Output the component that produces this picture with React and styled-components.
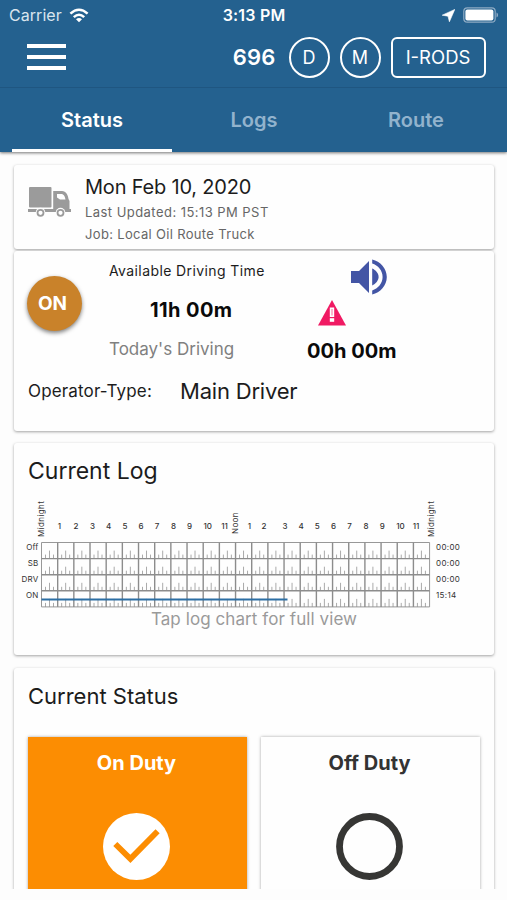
import React from 'react';
import styled, { createGlobalStyle } from 'styled-components';

const GlobalStyle = createGlobalStyle`
  * { box-sizing: border-box; }
  body {
    margin: 0;
    background: #fdfdfd;
    font-family: Inter, "Liberation Sans", sans-serif;
    color: #1c1c1c;
  }
`;

const Screen = styled.div`
  width: 507px;
  height: 900px;
  overflow: hidden;
  background: #fdfdfd;
`;

const Viewport = styled.div`
  height: 889px;
  overflow: hidden;
`;

const Header = styled.header`
  height: 152px;
  background: #24618f;
  color: #fff;
  box-shadow: 0 1px 3px rgba(0, 0, 0, 0.55);
`;

const StatusBar = styled.div`
  display: grid;
  grid-template-columns: 1fr auto 1fr;
  align-items: center;
  height: 30px;
  padding: 0 8px 0 9px;
`;

const StatusGroup = styled.div`
  display: flex;
  align-items: center;
  gap: ${(p) => p.$gap}px;
  justify-content: ${(p) => (p.$end ? 'flex-end' : 'flex-start')};
`;

const Text = styled.span`
  display: block;
  white-space: nowrap;
  font-size: ${(p) => p.$size}px;
  font-weight: ${(p) => p.$weight || 400};
  letter-spacing: ${(p) => p.$track || 0}px;
  line-height: ${(p) => (p.$line ? `${p.$line}px` : 'normal')};
  color: ${(p) => p.$color || 'inherit'};
  padding-left: ${(p) => p.$indent || 0}px;
`;

const Toolbar = styled.div`
  display: flex;
  align-items: center;
  height: 58px;
  padding: 0 21.5px 3px 27px;
  border-bottom: 1px solid #1f5681;
`;

const MenuButton = styled.button`
  display: flex;
  flex-direction: column;
  gap: 7px;
  width: 39px;
  margin: 0 auto 0 0;
  padding: 0;
  border: 0;
  background: none;
`;

const MenuLine = styled.span`
  height: 4px;
  background: #fff;
`;

const RoundChip = styled.span`
  display: grid;
  place-items: center;
  width: 41px;
  height: 41px;
  margin-right: 10px;
  border: 2px solid #fff;
  border-radius: 50%;
  font-size: 18px;
`;

const BoxChip = styled(RoundChip)`
  width: 95px;
  margin: 0;
  border-radius: 6px;
  font-size: 18.5px;
`;

const UnitNumber = styled(Text)`
  margin-right: 13px;
`;

const Tabs = styled.nav`
  display: grid;
  grid-template-columns: repeat(3, 162px);
  height: 64px;
  padding-left: 11px;
`;

const Tab = styled.div`
  display: grid;
  place-items: center;
  padding-top: ${(p) => (p.$active ? 3 : 0)}px;
  margin: 0 1px;
  border-bottom: ${(p) => (p.$active ? '3px solid #fff' : '0')};
  color: ${(p) => (p.$active ? '#fff' : '#92b3cd')};
  font-size: 20px;
  font-weight: 600;
`;

const Content = styled.main`
  display: flex;
  flex-direction: column;
  padding: 13px 13px 0 14px;
`;

const Card = styled.section`
  flex: none;
  height: ${(p) => p.$height}px;
  margin-bottom: ${(p) => p.$gap}px;
  background: #fefefe;
  border-radius: 3px;
  box-shadow: 0 1px 3px rgba(0, 0, 0, 0.36);
`;

const SummaryCard = styled(Card)`
  display: flex;
  padding: 9px 14px 7px;
`;

const TruckCell = styled.div`
  width: 57px;
  padding-top: 12px;
`;

const DrivingRow = styled.div`
  display: flex;
  height: 118px;
  padding-left: 13px;
`;

const DutyBadge = styled.div`
  display: grid;
  place-items: center;
  width: 55px;
  height: 55px;
  margin: 25px 27px 0 0;
  padding-right: 4px;
  border-radius: 50%;
  background: #c9822a;
  color: #fff;
  box-shadow: 0 2px 4px rgba(0, 0, 0, 0.5);
`;

const DrivingTimes = styled.div`
  width: 198px;
`;

const Alerts = styled.div`
  width: 100px;
`;

const SoundCell = styled.div`
  height: 49px;
  padding: 1.5px 0 0 37.5px;
`;

const WarningCell = styled.div`
  height: 31px;
  padding-left: 11px;
`;

const OperatorRow = styled.div`
  display: flex;
  align-items: center;
  height: 44px;
  padding-left: 14px;
`;

const OperatorLabel = styled.div`
  width: 152px;
`;

const LogChart = styled.svg`
  display: block;
  margin-top: -4px;
  font-size: 8px;
  fill: #333;
`;

const ChartHint = styled.div`
  display: flex;
  justify-content: center;
`;

const Duties = styled.div`
  display: grid;
  grid-template-columns: 219px 219px;
  gap: 14px;
  padding: 13px 14px 0;
`;

const DutyTile = styled.div`
  display: flex;
  flex-direction: column;
  align-items: center;
  gap: 37px;
  height: 200px;
  padding: 14px 2px 0 0;
  background: ${(p) => (p.$active ? '#fc8d02' : '#fefefe')};
  color: ${(p) => (p.$active ? '#fff' : '#333')};
  box-shadow: 0 0 3px rgba(0, 0, 0, 0.35);
`;

const WifiIcon = () => (
  <svg width="20" height="15" viewBox="0 0 20 15" fill="none" stroke="#fff" strokeWidth="2.6">
    <path d="M1.4 5.6Q10 -2.1 18.6 5.6" />
    <path d="M4.8 9.1Q10 4.4 15.2 9.1" />
    <path d="M7 11.3Q10 8.9 13 11.3L10 14.3Z" fill="#fff" stroke="none" />
  </svg>
);

const LocationIcon = () => (
  <svg width="13" height="13" viewBox="0 0 13 13">
    <path d="M12.8 0.4L0.2 6.2L6 7.2L7.4 12.8Z" fill="#fff" stroke="#fff" strokeWidth="0.6" strokeLinejoin="round" />
  </svg>
);

const BatteryIcon = () => (
  <svg width="36" height="16" viewBox="0 0 36 16">
    <rect x="0.8" y="0.8" width="31.4" height="14.4" rx="3.5" fill="none" stroke="#8eabc4" strokeWidth="1.2" />
    <rect x="2.4" y="2.4" width="28" height="11.2" rx="2" fill="#fff" />
    <path d="M33.5 5.5C35.6 6.2 35.6 9.8 33.5 10.5Z" fill="#8eabc4" />
  </svg>
);

const TruckIcon = () => (
  <svg width="44" height="32" viewBox="0 0 44 32" fill="#9b9b9b">
    <rect x="1" y="1" width="22.5" height="20.5" rx="1" />
    <path fillRule="evenodd" d="M25.2 5H34C38 5 40 9 40.5 13L41.5 15V23H43V26H25.2ZM29 8V11.5L32 13.5H37.5C37 10.5 36 8 33 8Z" />
    <rect x="0" y="23" width="26" height="3" />
    <circle cx="12.5" cy="26.6" r="4.8" fill="#fefefe" />
    <circle cx="32.5" cy="26.6" r="4.8" fill="#fefefe" />
    <circle cx="12.5" cy="26.8" r="3" fill="#fefefe" stroke="#9b9b9b" strokeWidth="1.8" />
    <circle cx="32.5" cy="26.8" r="3" fill="#fefefe" stroke="#9b9b9b" strokeWidth="1.8" />
  </svg>
);

const SpeakerIcon = () => (
  <svg width="48" height="48" viewBox="0 0 24 24" fill="#4355a5">
    <path d="M3 9v6h4l5 5V4L7 9H3z" />
    <path d="M16.8 12c0-1.77-1.5-3.49-3.2-4.2v8.4c1.7-.7 3.2-2.43 3.2-4.2z" />
    <path d="M13.6 3.23v2.06c2.89.86 5.2 3.54 5.2 6.71s-2.31 5.85-5.2 6.71v2.06c4.01-.91 7.3-4.49 7.3-8.77s-3.29-7.86-7.3-8.77z" />
  </svg>
);

const WarningIcon = () => (
  <svg width="28" height="26" viewBox="0 0 28 26">
    <path d="M14 0L28 25.6H0Z" fill="#f01a63" />
    <rect x="11.8" y="7.5" width="4.4" height="9.5" fill="#fff" />
    <rect x="13.4" y="9" width="1.2" height="6.5" fill="#f58aae" />
    <rect x="11.8" y="18.2" width="4.4" height="3.6" fill="#fff" />
  </svg>
);

const CheckedIcon = () => (
  <svg width="67" height="67" viewBox="0 0 67 67">
    <circle cx="33.5" cy="33.5" r="33.5" fill="#fff" />
    <path d="M12.3 31L27.4 45.8L54.6 18.2" fill="none" stroke="#fc8d02" strokeWidth="5.8" />
  </svg>
);

const EmptyIcon = () => (
  <svg width="67" height="67" viewBox="0 0 67 67">
    <circle cx="33.5" cy="33.5" r="30" fill="none" stroke="#363634" strokeWidth="6.8" />
  </svg>
);

const COL = 16.17;
const LEFT = 27.5;
const TOP = 47.5;
const ROW = 16.1;
const rows = [
  ['Off', '00:00'],
  ['SB', '00:00'],
  ['DRV', '00:00'],
  ['ON', '15:14'],
];
const hours = [
  [1, 45.5], [2, 62], [3, 78.5], [4, 94.5], [5, 111], [6, 127], [7, 143], [8, 159.5],
  [9, 175.5], [10, 193.7], [11, 210.5], [1, 235.5], [2, 250], [3, 271], [4, 287.2],
  [5, 303.2], [6, 319.5], [7, 335.5], [8, 352], [9, 368.2], [10, 386.5], [11, 402],
];
const cells = Array.from({ length: 24 }, (_, i) => i);

const DutyChart = () => (
  <LogChart width="480" height="114" viewBox="0 0 480 114">
    {hours.map(([label, x], i) => (
      <text key={i} x={x} y="34" textAnchor="middle" fontWeight="500">{label}</text>
    ))}
    <text transform="translate(30 42) rotate(-90)" letterSpacing="0.4">Midnight</text>
    <text transform="translate(224 39) rotate(-90)" letterSpacing="0.4">Noon</text>
    <text transform="translate(420 42) rotate(-90)" letterSpacing="0.4">Midnight</text>
    {rows.map(([name, total], r) => (
      <g key={name}>
        <text x="24.5" y={TOP + r * ROW + 7.5} textAnchor="end" letterSpacing="0.2">{name}</text>
        <text x="422" y={TOP + r * ROW + 7.5} letterSpacing="0.35">{total}</text>
        {cells.map((c) => {
          const x = LEFT + c * COL;
          const b = TOP + (r + 1) * ROW;
          return (
            <path
              key={c}
              d={`M${x + 4} ${b}v-4M${x + 8} ${b}v-8M${x + 12} ${b}v-4`}
              stroke="#aaa"
              strokeWidth="1"
            />
          );
        })}
      </g>
    ))}
    {Array.from({ length: 25 }, (_, i) => (
      <path
        key={i}
        d={`M${LEFT + i * COL} ${TOP}V${TOP + 4 * ROW}`}
        stroke="#8c8c8c"
        strokeWidth={i === 0 || i === 24 ? 0.9 : 1.4}
      />
    ))}
    {[0, 1, 2, 3, 4].map((i) => (
      <path
        key={i}
        d={`M${LEFT} ${TOP + i * ROW}h${24 * COL}`}
        stroke="#8c8c8c"
        strokeWidth={i === 0 || i === 4 ? 0.9 : 1.4}
      />
    ))}
    <path d="M27.5 104.5H273.5" stroke="#2c6ea3" strokeWidth="2" />
  </LogChart>
);

export default function App() {
  return (
    <Screen>
      <GlobalStyle />
      <Viewport>
        <Header>
          <StatusBar>
            <StatusGroup $gap={7}>
              <Text $size={16} $track={0.05} $color="#d9e5ee">Carrier</Text>
              <WifiIcon />
            </StatusGroup>
            <Text $size={16} $weight={600} $track={0.2}>3:13 PM</Text>
            <StatusGroup $gap={8} $end>
              <LocationIcon />
              <BatteryIcon />
            </StatusGroup>
          </StatusBar>
          <Toolbar>
            <MenuButton aria-label="Menu">
              <MenuLine />
              <MenuLine />
              <MenuLine />
            </MenuButton>
            <UnitNumber $size={22} $weight={600} $track={0.2}>696</UnitNumber>
            <RoundChip>D</RoundChip>
            <RoundChip>M</RoundChip>
            <BoxChip>I-RODS</BoxChip>
          </Toolbar>
          <Tabs>
            <Tab $active>Status</Tab>
            <Tab>Logs</Tab>
            <Tab>Route</Tab>
          </Tabs>
        </Header>
        <Content>
          <SummaryCard $height={84} $gap={2}>
            <TruckCell><TruckIcon /></TruckCell>
            <div>
              <Text $size={20} $line={27} $track={-0.2}>Mon Feb 10, 2020</Text>
              <Text $size={13} $line={22} $track={0.45} $color="#666">Last Updated: 15:13 PM PST</Text>
              <Text $size={13} $line={22} $track={0.33} $color="#666">Job: Local Oil Route Truck</Text>
            </div>
          </SummaryCard>
          <Card $height={180} $gap={12}>
            <DrivingRow>
              <DutyBadge><Text $size={19} $weight={700}>ON</Text></DutyBadge>
              <DrivingTimes>
                <Text $size={14} $line={40} $track={0.4}>Available Driving Time</Text>
                <Text $size={20} $line={39} $weight={700} $track={0.4} $indent={41} $color="#0a0a0a">11h 00m</Text>
                <Text $size={17} $line={39} $color="#808080">Today's Driving</Text>
              </DrivingTimes>
              <Alerts>
                <SoundCell><SpeakerIcon /></SoundCell>
                <WarningCell><WarningIcon /></WarningCell>
                <Text $size={20} $line={40} $weight={700} $color="#0a0a0a">00h 00m</Text>
              </Alerts>
            </DrivingRow>
            <OperatorRow>
              <OperatorLabel><Text $size={17} $line={24} $track={0.15}>Operator-Type:</Text></OperatorLabel>
              <Text $size={22} $line={26} $track={-0.2}>Main Driver</Text>
            </OperatorRow>
          </Card>
          <Card $height={212} $gap={13}>
            <Text $size={23} $line={56} $indent={14}>Current Log</Text>
            <DutyChart />
            <ChartHint><Text $size={17} $line={20} $track={0.08} $color="#9a9a9a">Tap log chart for full view</Text></ChartHint>
          </Card>
          <Card $height={290} $gap={0}>
            <Text $size={22} $line={56} $indent={14}>Current Status</Text>
            <Duties>
              <DutyTile $active>
                <Text $size={20} $line={25} $weight={700}>On Duty</Text>
                <CheckedIcon />
              </DutyTile>
              <DutyTile>
                <Text $size={20} $line={25} $weight={700}>Off Duty</Text>
                <EmptyIcon />
              </DutyTile>
            </Duties>
          </Card>
        </Content>
      </Viewport>
    </Screen>
  );
}
